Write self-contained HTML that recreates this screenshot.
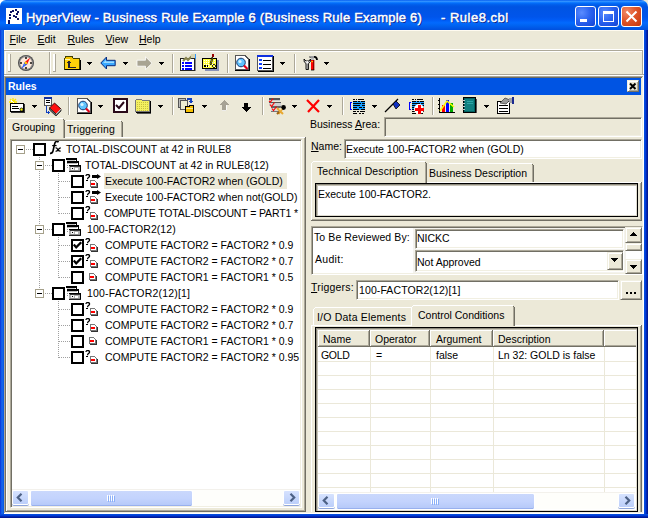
<!DOCTYPE html><html><head><meta charset="utf-8"><style>
html,body{margin:0;padding:0;width:648px;height:518px;overflow:hidden;background:#ECE9D8}
.a{position:absolute;box-sizing:border-box}
.t{position:absolute;font:10.5px/13px "Liberation Sans",sans-serif;white-space:pre;color:#000}
.u{text-decoration:underline}
</style></head><body>

<div class="a" style="left:0px;top:0px;width:8px;height:8px;background:#fff"></div>
<div class="a" style="left:0px;top:0px;width:648px;height:30px;background:linear-gradient(to bottom,#0058ee 0%,#3593ff 4%,#288eff 6%,#127dff 8%,#036ffc 10%,#0262ee 14%,#0057e5 20%,#0054e3 24%,#0055eb 56%,#005bf5 66%,#026afe 76%,#0062ef 86%,#0058e8 93%,#0050dc 100%);border-radius:6px 7px 0 0"></div>
<div class="a" style="left:0px;top:30px;width:4px;height:488px;background:linear-gradient(to right,#0831d9,#166aee 50%,#0855dd)"></div>
<div class="a" style="left:644px;top:30px;width:4px;height:488px;background:linear-gradient(to right,#0855dd,#003bda 40%,#001ea0 75%,#00138c)"></div>
<div class="a" style="left:0px;top:514px;width:648px;height:4px;background:linear-gradient(to bottom,#0855dd,#003bda 40%,#001ea0 75%,#00138c)"></div>
<svg class="a" style="left:6px;top:8px" width="16" height="16" viewBox="0 0 16 16" shape-rendering="crispEdges"><rect width="16" height="16" fill="#fff"/><rect x="2" y="14" width="2" height="2" fill="#0a1060"/><rect x="2" y="12" width="2" height="2" fill="#0a1060"/><rect x="3" y="9" width="2" height="2" fill="#0a1060"/><rect x="3" y="6" width="2" height="2" fill="#0a1060"/><rect x="4" y="3" width="2" height="2" fill="#0a1060"/><rect x="6" y="2" width="2" height="2" fill="#0a1060"/><rect x="9" y="1" width="2" height="2" fill="#0a1060"/><rect x="11" y="3" width="2" height="2" fill="#0a1060"/><rect x="10" y="5" width="2" height="2" fill="#0a1060"/><rect x="7" y="7" width="2" height="2" fill="#0a1060"/><rect x="9" y="8" width="2" height="2" fill="#0a1060"/><rect x="11" y="10" width="2" height="2" fill="#0a1060"/></svg>
<div class="a" style="left:26px;top:10px;font:13px/16px 'Liberation Sans',sans-serif;color:#fff;white-space:pre;-webkit-text-stroke:0.45px #fff;letter-spacing:0.22px;text-shadow:1px 1px 0 #0a1e80">HyperView - Business Rule Example 6 (Business Rule Example 6)</div>
<div class="a" style="left:441px;top:10px;font:13px/16px 'Liberation Sans',sans-serif;color:#fff;white-space:pre;-webkit-text-stroke:0.45px #fff;letter-spacing:0.5px;text-shadow:1px 1px 0 #0a1e80">- Rule8.cbl</div>
<div class="a" style="left:575px;top:6px;width:21px;height:21px;border:1px solid #fff;border-radius:3px;background:radial-gradient(circle at 30% 30%,#5a8cff 0%,#2c64f0 45%,#1a4fe0 80%,#1742c8 100%)"></div>
<svg class="a" style="left:575px;top:6px" width="21" height="21" viewBox="0 0 21 21" shape-rendering="crispEdges"><rect x="5" y="13" width="7" height="3" fill="#fff"/></svg>
<div class="a" style="left:598px;top:6px;width:21px;height:21px;border:1px solid #fff;border-radius:3px;background:radial-gradient(circle at 30% 30%,#5a8cff 0%,#2c64f0 45%,#1a4fe0 80%,#1742c8 100%)"></div>
<svg class="a" style="left:598px;top:6px" width="21" height="21" viewBox="0 0 21 21" shape-rendering="crispEdges"><rect x="5.5" y="5.5" width="10" height="10" fill="none" stroke="#fff" stroke-width="1"/><rect x="5" y="5" width="11" height="3" fill="#fff"/></svg>
<div class="a" style="left:621px;top:6px;width:21px;height:21px;border:1px solid #fff;border-radius:3px;background:radial-gradient(circle at 25% 25%,#f08a68 0%,#e0552a 45%,#cc3f14 85%,#b8350e 100%)"></div>
<svg class="a" style="left:621px;top:6px" width="21" height="21" viewBox="0 0 21 21" shape-rendering="crispEdges"><path d="M5.5 5.5 L15.5 15.5 M15.5 5.5 L5.5 15.5" stroke="#fff" stroke-width="2" shape-rendering="auto"/></svg>
<div class="t" style="left:9.5px;top:33px;"><span class="u">F</span>ile</div>
<div class="t" style="left:37.5px;top:33px;"><span class="u">E</span>dit</div>
<div class="t" style="left:67.5px;top:33px;"><span class="u">R</span>ules</div>
<div class="t" style="left:105.5px;top:33px;"><span class="u">V</span>iew</div>
<div class="t" style="left:139px;top:33px;"><span class="u">H</span>elp</div>
<div class="a" style="left:4px;top:30px;width:640px;height:1px;background:#FFFBF0"></div>
<div class="a" style="left:4px;top:30px;width:1px;height:19px;background:#FFFBF0"></div>
<div class="a" style="left:4px;top:49px;width:640px;height:1px;background:#fff"></div>
<div class="a" style="left:4px;top:50px;width:640px;height:1px;background:#ACA899"></div>
<div class="a" style="left:5px;top:51px;width:637px;height:1px;background:#fff"></div>
<div class="a" style="left:5px;top:51px;width:1px;height:23px;background:#fff"></div>
<div class="a" style="left:642px;top:50px;width:1px;height:25px;background:#ACA899"></div>
<div class="a" style="left:643px;top:30px;width:1px;height:46px;background:#fff"></div>
<div class="a" style="left:4px;top:74px;width:640px;height:1px;background:#ACA899"></div>
<div class="a" style="left:4px;top:75px;width:640px;height:1px;background:#fff"></div>
<div class="a" style="left:49px;top:52px;width:1px;height:22px;background:#ACA899"></div>
<div class="a" style="left:50px;top:52px;width:1px;height:22px;background:#fff"></div>
<div class="a" style="left:8px;top:54px;width:1px;height:18px;background:#fff"></div>
<div class="a" style="left:9px;top:54px;width:1px;height:18px;background:#fff"></div>
<div class="a" style="left:10px;top:54px;width:1px;height:18px;background:#ACA899"></div>
<div class="a" style="left:8px;top:71px;width:3px;height:1px;background:#ACA899"></div>
<div class="a" style="left:53px;top:54px;width:1px;height:18px;background:#fff"></div>
<div class="a" style="left:54px;top:54px;width:1px;height:18px;background:#fff"></div>
<div class="a" style="left:55px;top:54px;width:1px;height:18px;background:#ACA899"></div>
<div class="a" style="left:53px;top:71px;width:3px;height:1px;background:#ACA899"></div>
<svg class="a" style="left:17px;top:54px" width="18" height="18" viewBox="0 0 18 18" shape-rendering="crispEdges"><g shape-rendering="auto"><circle cx="9" cy="9" r="8" fill="#4a4a4a" /><circle cx="9" cy="9" r="7.2" fill="#8a8a8a"/><circle cx="9" cy="9" r="6" fill="#fce8d8"/><path d="M13.2 3.6 L10.2 10.2 L7.6 8.2 Z" fill="#ff1010"/><path d="M4.6 14.6 L7.6 8.2 L10.2 10.2 Z" fill="#1020ff"/><path d="M5.5 13.5 L7.6 9.5 L8 11Z" fill="#40c0ff"/><circle cx="8.8" cy="9.1" r="1.3" fill="#ffd000"/><rect x="8.3" y="3" width="1.4" height="2" fill="#000"/><rect x="8.3" y="13" width="1.4" height="2" fill="#000"/><rect x="3" y="8.3" width="2" height="1.4" fill="#000"/><rect x="13" y="8.3" width="2" height="1.4" fill="#000"/></g></svg>
<svg class="a" style="left:64px;top:55px" width="17" height="16" viewBox="0 0 17 16" shape-rendering="crispEdges"><path d="M2 1.5 H8 L9.5 3.5 H15.5 V14.5 H0.5 V3.5 Z" fill="#f5c400" stroke="#404000" stroke-width="1"/><rect x="1" y="4" width="14" height="10" fill="#ffd20a"/><rect x="1" y="4" width="5" height="1" fill="#fff8b0"/><path d="M0.5 14.5 H16.5 V4.5" stroke="#000" fill="none" stroke-width="1"/><path d="M5 12.5 H12 M5 12.5 V6" stroke="#223" stroke-width="1.4" fill="none"/><path d="M2.5 8 L5 5 L7.5 8 Z" fill="#223"/></svg>
<svg class="a" style="left:87px;top:62px" width="5" height="3" viewBox="0 0 5 3" shape-rendering="crispEdges"><rect x="0" y="0" width="5" height="1" fill="#000"/><rect x="1" y="1" width="3" height="1" fill="#000"/><rect x="2" y="2" width="1" height="1" fill="#000"/></svg>
<svg class="a" style="left:100px;top:56px" width="16" height="14" viewBox="0 0 16 14" shape-rendering="crispEdges"><g shape-rendering="auto"><path d="M0.8 7 L6.5 1 V4.3 H15.2 V9.7 H6.5 V13 Z" fill="#39a8ff" stroke="#0b2a7a" stroke-width="1"/><path d="M3 7 L6 4 V5.5 H14 V7 H3Z" fill="#9fdcff"/></g></svg>
<svg class="a" style="left:123px;top:62px" width="5" height="3" viewBox="0 0 5 3" shape-rendering="crispEdges"><rect x="0" y="0" width="5" height="1" fill="#000"/><rect x="1" y="1" width="3" height="1" fill="#000"/><rect x="2" y="2" width="1" height="1" fill="#000"/></svg>
<svg class="a" style="left:136px;top:56px" width="17" height="15" viewBox="0 0 17 15" shape-rendering="crispEdges"><g shape-rendering="auto"><path d="M16 7.2 L9.5 0.8 V4.2 H1 V10.2 H9.5 V13.6 Z" fill="#a8a493" stroke="#fff" stroke-width="0.8"/></g></svg>
<svg class="a" style="left:159px;top:62px" width="5" height="3" viewBox="0 0 5 3" shape-rendering="crispEdges"><rect x="0" y="0" width="5" height="1" fill="#000"/><rect x="1" y="1" width="3" height="1" fill="#000"/><rect x="2" y="2" width="1" height="1" fill="#000"/></svg>
<div class="a" style="left:172px;top:54px;width:1px;height:19px;background:#ACA899"></div>
<div class="a" style="left:173px;top:54px;width:1px;height:19px;background:#fff"></div>
<svg class="a" style="left:180px;top:54px" width="17" height="17" viewBox="0 0 17 17" shape-rendering="crispEdges"><rect x="0.5" y="4.5" width="14" height="12" fill="#fff" stroke="#222" stroke-width="1"/><rect x="15" y="5" width="1" height="12" fill="#888"/><path d="M3 7 L6 4 L8 6 L12 2" stroke="#8a8650" stroke-width="2.2" fill="none" shape-rendering="auto"/><rect x="11" y="0" width="5" height="4" fill="#d8d4b0"/><rect x="15" y="0" width="1" height="5" fill="#39f"/><rect x="2" y="8" width="2" height="1.5" fill="#00f"/><rect x="5" y="8" width="7" height="1.5" fill="#00f"/><rect x="2" y="11" width="2" height="1.5" fill="#00f"/><rect x="5" y="11" width="7" height="1.5" fill="#00f"/><rect x="2" y="14" width="2" height="1.5" fill="#00f"/><rect x="5" y="14" width="7" height="1.5" fill="#00f"/></svg>
<svg class="a" style="left:202px;top:54px" width="18" height="17" viewBox="0 0 18 17" shape-rendering="crispEdges"><rect x="3" y="6" width="14" height="11" fill="#8a93b8"/><rect x="0.5" y="4.5" width="14" height="10" fill="#ffff40" stroke="#000" stroke-width="1"/><path d="M1 5 h13 v9 h-13z" fill="url(#dots)"/><circle cx="11" cy="1.8" r="1.5" fill="#900"/><path d="M10 3 L8 10 L9 11 L11 4 Z" fill="#ff0" stroke="#000" stroke-width="0.8" shape-rendering="auto"/><circle cx="3" cy="12" r="0.8" fill="#000"/><circle cx="5.5" cy="12" r="0.8" fill="#000"/><circle cx="12" cy="12" r="1.2" fill="none" stroke="#000" stroke-width="0.8"/><defs><pattern id="dots" width="2" height="2" patternUnits="userSpaceOnUse"><rect width="1" height="1" fill="#fff"/></pattern></defs></svg>
<div class="a" style="left:227px;top:54px;width:1px;height:19px;background:#ACA899"></div>
<div class="a" style="left:228px;top:54px;width:1px;height:19px;background:#fff"></div>
<svg class="a" style="left:235px;top:55px" width="15" height="16" viewBox="0 0 15 16" shape-rendering="crispEdges"><path d="M0.5 0.5 H10 L13.5 4 V14.5 H0.5 Z" fill="#fff" stroke="#555" stroke-width="1"/><path d="M0 15 H14 V4" stroke="#000" fill="none"/><g shape-rendering="auto"><circle cx="6" cy="7.5" r="4.3" fill="#5fc3ff" stroke="#1a3a70" stroke-width="1"/><circle cx="5" cy="6.5" r="1.6" fill="#d8f4ff"/><path d="M9 10.5 L12.5 14" stroke="#e0001a" stroke-width="2.2"/></g></svg>
<svg class="a" style="left:257px;top:55px" width="17" height="17" viewBox="0 0 17 17" shape-rendering="crispEdges"><rect x="0.5" y="0.5" width="15" height="15" fill="#fff" stroke="#555"/><rect x="0" y="0" width="16" height="2" fill="#1030e0"/><path d="M16.5 1 V16.5 H1" stroke="#000" fill="none"/><rect x="2" y="4" width="3" height="2" fill="#1040ff"/><rect x="6" y="4.5" width="8" height="1.2" fill="#000"/><rect x="2" y="8" width="3" height="2" fill="#1040ff"/><rect x="6" y="8.5" width="8" height="1.2" fill="#000"/><rect x="2" y="12" width="3" height="2" fill="#1040ff"/><rect x="6" y="12.5" width="8" height="1.2" fill="#000"/></svg>
<svg class="a" style="left:280px;top:62px" width="5" height="3" viewBox="0 0 5 3" shape-rendering="crispEdges"><rect x="0" y="0" width="5" height="1" fill="#000"/><rect x="1" y="1" width="3" height="1" fill="#000"/><rect x="2" y="2" width="1" height="1" fill="#000"/></svg>
<div class="a" style="left:294px;top:54px;width:1px;height:19px;background:#ACA899"></div>
<div class="a" style="left:295px;top:54px;width:1px;height:19px;background:#fff"></div>
<svg class="a" style="left:302px;top:55px" width="16" height="16" viewBox="0 0 16 16" shape-rendering="crispEdges"><g shape-rendering="auto"><path d="M2 4 Q1.5 7.5 4 8.5 L4 14.5 H6.5 L6.5 8.5 Q9 7.5 8.5 4 L7 6 H4 Z" fill="#d0d0d0" stroke="#000" stroke-width="0.9"/><circle cx="5.2" cy="7" r="0.9" fill="#fff"/><path d="M6 9 V14" stroke="#333" stroke-width="0.8"/><path d="M7.5 1.8 H12.5 Q15 2 15 5" stroke="#000" stroke-width="1.8" fill="none"/><path d="M7.5 1.8 H12" stroke="#c8c8c8" stroke-width="1.2"/><rect x="9" y="5" width="3.2" height="10" fill="#ff0000"/><rect x="11.2" y="5" width="1" height="10" fill="#700"/><rect x="9" y="2.5" width="3" height="2.5" fill="#bbb"/><rect x="9.5" y="6" width="1.2" height="1.2" fill="#ff0"/><path d="M9 15 H12.2" stroke="#000" stroke-width="0.8"/></g></svg>
<svg class="a" style="left:324px;top:62px" width="5" height="3" viewBox="0 0 5 3" shape-rendering="crispEdges"><rect x="0" y="0" width="5" height="1" fill="#000"/><rect x="1" y="1" width="3" height="1" fill="#000"/><rect x="2" y="2" width="1" height="1" fill="#000"/></svg>
<div class="a" style="left:4px;top:76px;width:640px;height:1px;background:#ACA899"></div>
<div class="a" style="left:4px;top:77px;width:640px;height:1px;background:#716F64"></div>
<div class="a" style="left:4px;top:76px;width:1px;height:438px;background:#ACA899"></div>
<div class="a" style="left:5px;top:77px;width:1px;height:436px;background:#716F64"></div>
<div class="a" style="left:643px;top:76px;width:1px;height:438px;background:#fff"></div>
<div class="a" style="left:642px;top:77px;width:1px;height:436px;background:#F1EFE2"></div>
<div class="a" style="left:4px;top:513px;width:640px;height:1px;background:#fff"></div>
<div class="a" style="left:5px;top:512px;width:638px;height:1px;background:#F1EFE2"></div>
<div class="a" style="left:6px;top:78px;width:635px;height:17px;background:#0054E3"></div>
<div class="a" style="left:8px;top:80px;font:bold 10.5px/13px 'Liberation Sans',sans-serif;color:#fff">Rules</div>
<div class="a" style="left:627px;top:80px;width:12px;height:12px;background:#ECE9D8;border-style:solid;border-width:1px;border-color:#F1EFE2 #716F64 #716F64 #F1EFE2;box-shadow:inset 1px 1px 0 #fff, inset -1px -1px 0 #ACA899"></div>
<svg class="a" style="left:627px;top:80px" width="12" height="12" viewBox="0 0 12 12" shape-rendering="crispEdges"><path d="M3 3.5 L8.5 9 M8.5 3.5 L3 9" stroke="#000" stroke-width="2" shape-rendering="auto"/></svg>
<svg class="a" style="left:8px;top:97px" width="18" height="17" viewBox="0 0 18 17" shape-rendering="crispEdges"><g shape-rendering="auto" stroke="#ffe800" stroke-width="1.3"><path d="M5 1 V9 M1 5 H9 M2 2 L8 8 M8 2 L2 8"/></g><path d="M3 3.5 L7 6.5" stroke="#fff" stroke-width="1"/><rect x="2.5" y="6.5" width="13" height="8" fill="#fff" stroke="#000"/><rect x="16" y="7" width="1" height="9" fill="#333"/><rect x="3" y="15" width="14" height="1" fill="#333"/><rect x="4" y="9" width="6" height="1" fill="#000"/><rect x="4" y="11" width="7" height="1" fill="#000"/><circle cx="13.5" cy="12.5" r="1.5" fill="#ff0" stroke="#000" stroke-width="0.8" shape-rendering="auto"/></svg>
<svg class="a" style="left:32px;top:105px" width="5" height="3" viewBox="0 0 5 3" shape-rendering="crispEdges"><rect x="0" y="0" width="5" height="1" fill="#000"/><rect x="1" y="1" width="3" height="1" fill="#000"/><rect x="2" y="2" width="1" height="1" fill="#000"/></svg>
<svg class="a" style="left:44px;top:97px" width="18" height="19" viewBox="0 0 18 19" shape-rendering="crispEdges"><rect x="0.5" y="0.5" width="7" height="8" fill="#fff" stroke="#555"/><rect x="0" y="0" width="8" height="2" fill="#1030a0"/><rect x="2" y="3" width="4" height="1" fill="#000"/><rect x="2" y="5" width="4" height="1" fill="#000"/><path d="M2.5 9 V15.5 H4" stroke="#1040c0" stroke-width="1.6" fill="none"/><path d="M3.5 13 L6 15.5 L3.5 18 Z" fill="#1040c0"/><g shape-rendering="auto"><path d="M5.5 11 L10.5 6 L17 12 L12 17 Z" fill="#ff1010" stroke="#300" stroke-width="0.9"/><path d="M5.5 11 V13 L12 19 L17 14 V12 L12 17 Z" fill="#707070" stroke="#222" stroke-width="0.8"/><path d="M12 17 L17 12" stroke="#fff" stroke-width="0.7"/></g></svg>
<div class="a" style="left:68px;top:97px;width:1px;height:18px;background:#ACA899"></div>
<div class="a" style="left:69px;top:97px;width:1px;height:18px;background:#fff"></div>
<svg class="a" style="left:77px;top:98px" width="15" height="16" viewBox="0 0 15 16" shape-rendering="crispEdges"><path d="M0.5 0.5 H10 L13.5 4 V14.5 H0.5 Z" fill="#fff" stroke="#555" stroke-width="1"/><path d="M0 15 H14 V4" stroke="#000" fill="none"/><g shape-rendering="auto"><circle cx="6" cy="7.5" r="4.3" fill="#5fc3ff" stroke="#1a3a70" stroke-width="1"/><circle cx="5" cy="6.5" r="1.6" fill="#d8f4ff"/><path d="M9 10.5 L12.5 14" stroke="#e0001a" stroke-width="2.2"/></g></svg>
<svg class="a" style="left:98px;top:105px" width="5" height="3" viewBox="0 0 5 3" shape-rendering="crispEdges"><rect x="0" y="0" width="5" height="1" fill="#000"/><rect x="1" y="1" width="3" height="1" fill="#000"/><rect x="2" y="2" width="1" height="1" fill="#000"/></svg>
<svg class="a" style="left:112px;top:97px" width="16" height="16" viewBox="0 0 16 16" shape-rendering="crispEdges"><rect x="1.5" y="1.5" width="13" height="13" fill="#fff" stroke="#2a0a1a" stroke-width="2"/><path d="M4 8 L7 11 L12 5" stroke="#2a0a1a" stroke-width="2" fill="none" shape-rendering="auto"/></svg>
<svg class="a" style="left:135px;top:98px" width="17" height="16" viewBox="0 0 17 16" shape-rendering="crispEdges"><path d="M0.5 2.5 L2 1 H6 L7.5 2.5 H14.5 V13.5 H0.5 Z" fill="#f4f060" stroke="#777" stroke-width="1"/><path d="M1 3 h13 v10 h-13z" fill="url(#dots2)"/><path d="M1 14.5 H15.5 V3" stroke="#000" fill="none"/><rect x="2" y="15" width="14" height="1" fill="#555"/><defs><pattern id="dots2" width="2" height="2" patternUnits="userSpaceOnUse"><rect width="1" height="1" fill="#c8c040"/></pattern></defs></svg>
<svg class="a" style="left:158px;top:105px" width="5" height="3" viewBox="0 0 5 3" shape-rendering="crispEdges"><rect x="0" y="0" width="5" height="1" fill="#000"/><rect x="1" y="1" width="3" height="1" fill="#000"/><rect x="2" y="2" width="1" height="1" fill="#000"/></svg>
<div class="a" style="left:172px;top:97px;width:1px;height:18px;background:#ACA899"></div>
<div class="a" style="left:173px;top:97px;width:1px;height:18px;background:#fff"></div>
<svg class="a" style="left:178px;top:97px" width="18" height="17" viewBox="0 0 18 17" shape-rendering="crispEdges"><rect x="0.5" y="1.5" width="7" height="9" fill="#bbb" stroke="#555"/><rect x="2.5" y="3.5" width="7" height="9" fill="#eeeed0" stroke="#555"/><path d="M9 2 H13 V5" stroke="#1040c0" stroke-width="1.3" fill="none"/><path d="M11 4 L13 6.5 L15 4" fill="#1040c0"/><path d="M7.5 9.5 H11 L12 8.5 H15.5 V15.5 H7.5 Z" fill="#f5c000" stroke="#000" stroke-width="1"/><rect x="8" y="11" width="7" height="1" fill="#ffe890"/></svg>
<svg class="a" style="left:202px;top:105px" width="5" height="3" viewBox="0 0 5 3" shape-rendering="crispEdges"><rect x="0" y="0" width="5" height="1" fill="#000"/><rect x="1" y="1" width="3" height="1" fill="#000"/><rect x="2" y="2" width="1" height="1" fill="#000"/></svg>
<svg class="a" style="left:219px;top:100px" width="10" height="11" viewBox="0 0 10 11" shape-rendering="crispEdges"><path d="M5 0 L10 5 H7 V11 H3 V5 H0 Z" fill="#a6a294"/><path d="M3 10.5 H7 M7 5 V10" stroke="#fff" stroke-width="0.8"/></svg>
<svg class="a" style="left:241px;top:103px" width="10" height="9" viewBox="0 0 10 9" shape-rendering="crispEdges"><path d="M5 9 L10 4 H7 V0 H3 V4 H0 Z" fill="#000"/></svg>
<div class="a" style="left:262px;top:97px;width:1px;height:18px;background:#ACA899"></div>
<div class="a" style="left:263px;top:97px;width:1px;height:18px;background:#fff"></div>
<svg class="a" style="left:268px;top:97px" width="18" height="18" viewBox="0 0 18 18" shape-rendering="crispEdges"><rect x="1" y="1" width="11" height="3" fill="#c8c8c8"/><rect x="1" y="1" width="11" height="1.5" fill="#555"/><rect x="1" y="4.5" width="12" height="4" fill="#d0d0d0"/><rect x="1" y="4.5" width="12" height="1.5" fill="#555"/><rect x="3" y="9" width="10" height="6" fill="#d8d8d8"/><rect x="3" y="9" width="10" height="1.5" fill="#666"/><rect x="3" y="13.5" width="10" height="1.5" fill="#777"/><g shape-rendering="auto" fill="none" stroke="#f00" stroke-width="1.1"><path d="M1 4 L2.5 5 L5 1.5"/><path d="M2 7.5 L3.5 9.5 L6.5 5.5"/><path d="M4 11.5 L5.5 13.5 L8.5 9.5"/></g><g shape-rendering="auto"><path d="M9 11 L15 17 M10.5 17 L15 11" stroke="#e8a830" stroke-width="2"/><path d="M9 17 L11 15" stroke="#a06010" stroke-width="2"/><circle cx="15.5" cy="10.5" r="2.4" fill="#000"/><circle cx="12.5" cy="12" r="1.2" fill="#f4e0b0"/></g></svg>
<svg class="a" style="left:292px;top:105px" width="5" height="3" viewBox="0 0 5 3" shape-rendering="crispEdges"><rect x="0" y="0" width="5" height="1" fill="#000"/><rect x="1" y="1" width="3" height="1" fill="#000"/><rect x="2" y="2" width="1" height="1" fill="#000"/></svg>
<svg class="a" style="left:305px;top:98px" width="16" height="16" viewBox="0 0 16 16" shape-rendering="crispEdges"><path d="M2 2 L14 14 M14 2 L3 14" stroke="#f00" stroke-width="2.2" shape-rendering="auto"/></svg>
<svg class="a" style="left:327px;top:105px" width="5" height="3" viewBox="0 0 5 3" shape-rendering="crispEdges"><rect x="0" y="0" width="5" height="1" fill="#000"/><rect x="1" y="1" width="3" height="1" fill="#000"/><rect x="2" y="2" width="1" height="1" fill="#000"/></svg>
<div class="a" style="left:342px;top:97px;width:1px;height:18px;background:#ACA899"></div>
<div class="a" style="left:343px;top:97px;width:1px;height:18px;background:#fff"></div>
<svg class="a" style="left:350px;top:98px" width="16" height="17" viewBox="0 0 16 17" shape-rendering="crispEdges"><rect x="0" y="4" width="2" height="1" fill="#00f"/><rect x="0" y="4" width="1" height="8" fill="#00f"/><rect x="0" y="11" width="2" height="1" fill="#00f"/><rect x="3" y="3" width="12" height="9" fill="#1aa0ff"/><rect x="3" y="1" width="2" height="1" fill="#000"/><rect x="6" y="1" width="1" height="1" fill="#000"/><rect x="8" y="1" width="6" height="1" fill="#000"/><rect x="3" y="3" width="4" height="1" fill="#000"/><rect x="8" y="3" width="2" height="1" fill="#000"/><rect x="11" y="3" width="4" height="1" fill="#000"/><rect x="3" y="5" width="5" height="1" fill="#000"/><rect x="8" y="5" width="3" height="1" fill="#000"/><rect x="12" y="5" width="3" height="1" fill="#000"/><rect x="3" y="7" width="5" height="1" fill="#000"/><rect x="8" y="7" width="2" height="1" fill="#000"/><rect x="12" y="7" width="3" height="1" fill="#000"/><rect x="3" y="9" width="4" height="1" fill="#000"/><rect x="9" y="9" width="3" height="1" fill="#000"/><rect x="13" y="9" width="2" height="1" fill="#000"/><rect x="3" y="11" width="6" height="1" fill="#000"/><rect x="11" y="11" width="4" height="1" fill="#000"/><rect x="3" y="13" width="3" height="1" fill="#000"/><rect x="7" y="13" width="2" height="1" fill="#000"/><rect x="10" y="13" width="5" height="1" fill="#000"/><rect x="3" y="15" width="4" height="1" fill="#000"/><rect x="9" y="15" width="2" height="1" fill="#000"/><rect x="12" y="15" width="2" height="1" fill="#000"/></svg>
<svg class="a" style="left:372px;top:105px" width="5" height="3" viewBox="0 0 5 3" shape-rendering="crispEdges"><rect x="0" y="0" width="5" height="1" fill="#000"/><rect x="1" y="1" width="3" height="1" fill="#000"/><rect x="2" y="2" width="1" height="1" fill="#000"/></svg>
<svg class="a" style="left:384px;top:98px" width="17" height="15" viewBox="0 0 17 15" shape-rendering="crispEdges"><g shape-rendering="auto"><path d="M1 14 L14 1" stroke="#000" stroke-width="1.3"/><path d="M9 6 L12 3 L16 7 L12 11 Z" fill="#1030c0" stroke="#000" stroke-width="0.8"/></g></svg>
<svg class="a" style="left:409px;top:98px" width="16" height="17" viewBox="0 0 16 17" shape-rendering="crispEdges"><rect x="0" y="4" width="2" height="1" fill="#00f"/><rect x="0" y="4" width="1" height="8" fill="#00f"/><rect x="0" y="11" width="2" height="1" fill="#00f"/><rect x="3" y="3" width="12" height="9" fill="#1aa0ff"/><rect x="3" y="1" width="2" height="1" fill="#000"/><rect x="6" y="1" width="1" height="1" fill="#000"/><rect x="8" y="1" width="6" height="1" fill="#000"/><rect x="3" y="3" width="4" height="1" fill="#000"/><rect x="8" y="3" width="2" height="1" fill="#000"/><rect x="11" y="3" width="4" height="1" fill="#000"/><rect x="3" y="5" width="5" height="1" fill="#000"/><rect x="8" y="5" width="3" height="1" fill="#000"/><rect x="12" y="5" width="3" height="1" fill="#000"/><rect x="3" y="7" width="5" height="1" fill="#000"/><rect x="8" y="7" width="2" height="1" fill="#000"/><rect x="12" y="7" width="3" height="1" fill="#000"/><rect x="3" y="9" width="4" height="1" fill="#000"/><rect x="9" y="9" width="3" height="1" fill="#000"/><rect x="13" y="9" width="2" height="1" fill="#000"/><rect x="3" y="11" width="6" height="1" fill="#000"/><rect x="11" y="11" width="4" height="1" fill="#000"/><rect x="3" y="13" width="3" height="1" fill="#000"/><rect x="7" y="13" width="2" height="1" fill="#000"/><rect x="10" y="13" width="5" height="1" fill="#000"/><rect x="3" y="15" width="4" height="1" fill="#000"/><rect x="9" y="15" width="2" height="1" fill="#000"/><rect x="12" y="15" width="2" height="1" fill="#000"/><g shape-rendering="auto"><circle cx="10" cy="11" r="5" fill="#fff"/></g><rect x="8.5" y="6.5" width="3" height="9" fill="#f00"/><rect x="5.5" y="9.5" width="9" height="3" fill="#f00"/></svg>
<div class="a" style="left:432px;top:97px;width:1px;height:18px;background:#ACA899"></div>
<div class="a" style="left:433px;top:97px;width:1px;height:18px;background:#fff"></div>
<svg class="a" style="left:438px;top:97px" width="18" height="17" viewBox="0 0 18 17" shape-rendering="crispEdges"><path d="M1.5 1 V15.5 H17" stroke="#000" fill="none"/><rect x="4" y="8" width="3" height="7" fill="#f00"/><rect x="8" y="3" width="3" height="12" fill="#00f"/><rect x="12" y="6" width="3" height="9" fill="#0a0"/><path d="M2 14 L9 4 L16 10" stroke="#ff0" stroke-width="1.5" fill="none" shape-rendering="auto"/><path d="M0 3 H1 M0 7 H1 M0 11 H1" stroke="#000"/></svg>
<svg class="a" style="left:462px;top:97px" width="15" height="17" viewBox="0 0 15 17" shape-rendering="crispEdges"><rect x="1.5" y="0.5" width="12" height="15" fill="#006060" stroke="#000"/><rect x="3" y="2" width="9" height="12" fill="#108080"/><rect x="13.5" y="2" width="1" height="14" fill="#555"/><path d="M0 3 H3 M0 6 H3 M0 9 H3 M0 12 H3" stroke="#ccc" stroke-width="1"/><path d="M5 4 H11 M5 6 H11" stroke="#40c0c0" stroke-width="0.6"/></svg>
<svg class="a" style="left:484px;top:105px" width="5" height="3" viewBox="0 0 5 3" shape-rendering="crispEdges"><rect x="0" y="0" width="5" height="1" fill="#000"/><rect x="1" y="1" width="3" height="1" fill="#000"/><rect x="2" y="2" width="1" height="1" fill="#000"/></svg>
<svg class="a" style="left:497px;top:97px" width="18" height="17" viewBox="0 0 18 17" shape-rendering="crispEdges"><rect x="0.5" y="4.5" width="12" height="12" fill="#fff" stroke="#000"/><rect x="2" y="8" width="9" height="1" fill="#000"/><rect x="2" y="11" width="9" height="1" fill="#000"/><rect x="2" y="14" width="9" height="1" fill="#000"/><path d="M3 6 L8 1 L13 3 L9 7 Z" fill="#999" stroke="#333" stroke-width="0.7" shape-rendering="auto"/><rect x="12" y="1" width="4" height="5" fill="#a0a0a8"/><rect x="15" y="0" width="2" height="7" fill="#1a2a90"/></svg>
<div class="a" style="left:6px;top:137px;width:300px;height:1px;background:#fff"></div>
<div class="a" style="left:6px;top:137px;width:1px;height:375px;background:#fff"></div>
<div class="a" style="left:305px;top:137px;width:1px;height:375px;background:#716F64"></div>
<div class="a" style="left:304px;top:138px;width:1px;height:373px;background:#ACA899"></div>
<div class="a" style="left:6px;top:511px;width:300px;height:1px;background:#716F64"></div>
<div class="a" style="left:7px;top:510px;width:298px;height:1px;background:#ACA899"></div>
<div class="a" style="left:7px;top:119px;width:57px;height:19px;background:#ECE9D8"></div>
<div class="a" style="left:8px;top:118px;width:55px;height:1px;background:#fff"></div>
<div class="a" style="left:6px;top:120px;width:1px;height:18px;background:#fff"></div>
<div class="a" style="left:7px;top:119px;width:1px;height:1px;background:#fff"></div>
<div class="a" style="left:64px;top:120px;width:1px;height:18px;background:#716F64"></div>
<div class="a" style="left:63px;top:119px;width:1px;height:19px;background:#ACA899"></div>
<div class="a" style="left:63px;top:119px;width:1px;height:1px;background:#716F64"></div>
<div class="t" style="left:12px;top:121px;">Grouping</div>
<div class="a" style="left:66px;top:120px;width:55px;height:1px;background:#fff"></div>
<div class="a" style="left:65px;top:121px;width:1px;height:1px;background:#fff"></div>
<div class="a" style="left:122px;top:122px;width:1px;height:15px;background:#716F64"></div>
<div class="a" style="left:121px;top:121px;width:1px;height:16px;background:#ACA899"></div>
<div class="a" style="left:121px;top:121px;width:1px;height:1px;background:#716F64"></div>
<div class="t" style="left:67px;top:123px;letter-spacing:0.1px">Triggering</div>
<div class="a" style="left:10px;top:139px;width:292px;height:369px;background:#fff;border-style:solid;border-width:1px;border-color:#ACA899 #fff #fff #ACA899;box-shadow:inset 1px 1px 0 #716F64, inset -1px -1px 0 #F1EFE2"></div>
<div class="a" style="left:12px;top:489px;width:288px;height:17px;background:#FEFEFB;border-top:1px solid #F3F1EC"></div>
<div class="a" style="left:30px;top:490px;width:163px;height:16px;background:linear-gradient(to bottom,#CAD8FC 0%,#C3D3FD 50%,#B4C8F8 100%);border:1px solid #fff;border-bottom:none;border-radius:2px;box-shadow:inset 0 -1px 0 #98B0EE"></div>
<div class="a" style="left:107px;top:495px;width:1px;height:6px;background:#fff"></div>
<div class="a" style="left:108px;top:496px;width:1px;height:6px;background:#8CB0F8"></div>
<div class="a" style="left:109px;top:495px;width:1px;height:6px;background:#fff"></div>
<div class="a" style="left:110px;top:496px;width:1px;height:6px;background:#8CB0F8"></div>
<div class="a" style="left:111px;top:495px;width:1px;height:6px;background:#fff"></div>
<div class="a" style="left:112px;top:496px;width:1px;height:6px;background:#8CB0F8"></div>
<div class="a" style="left:113px;top:495px;width:1px;height:6px;background:#fff"></div>
<div class="a" style="left:114px;top:496px;width:1px;height:6px;background:#8CB0F8"></div>
<div class="a" style="left:12px;top:490px;width:17px;height:15px;background:linear-gradient(to bottom,#D6E2FE,#BCCFFA);border:1px solid #fff;border-radius:2px;box-shadow:0 1px 0 #8FA6DC"></div>
<svg class="a" style="left:16px;top:493px" width="8" height="9" viewBox="0 0 8 9" shape-rendering="crispEdges"><path d="M5.5 0.8 L1.8 4.5 L5.5 8.2" stroke="#4D6185" stroke-width="2.2" fill="none" shape-rendering="auto"/></svg>
<div class="a" style="left:283px;top:490px;width:17px;height:15px;background:linear-gradient(to bottom,#D6E2FE,#BCCFFA);border:1px solid #fff;border-radius:2px;box-shadow:0 1px 0 #8FA6DC"></div>
<svg class="a" style="left:288px;top:493px" width="8" height="9" viewBox="0 0 8 9" shape-rendering="crispEdges"><path d="M2.5 0.8 L6.2 4.5 L2.5 8.2" stroke="#4D6185" stroke-width="2.2" fill="none" shape-rendering="auto"/></svg>
<div class="a" style="left:0;top:0;width:648px;height:518px;clip-path:inset(141px 347px 29px 12px)">
<div class="a" style="left:39px;top:157px;width:1px;height:137px;background:repeating-linear-gradient(to bottom,#A0A0A0 0 1px,transparent 1px 2px)"></div>
<div class="a" style="left:58px;top:173px;width:1px;height:41px;background:repeating-linear-gradient(to bottom,#A0A0A0 0 1px,transparent 1px 2px)"></div>
<div class="a" style="left:58px;top:237px;width:1px;height:41px;background:repeating-linear-gradient(to bottom,#A0A0A0 0 1px,transparent 1px 2px)"></div>
<div class="a" style="left:58px;top:301px;width:1px;height:57px;background:repeating-linear-gradient(to bottom,#A0A0A0 0 1px,transparent 1px 2px)"></div>
<div class="a" style="left:16px;top:145px;width:9px;height:9px;border:1px solid #A5A08A;background:#fff"></div>
<div class="a" style="left:18px;top:149px;width:5px;height:1px;background:#000"></div>
<div class="a" style="left:26px;top:149px;width:7px;height:1px;background:repeating-linear-gradient(to right,#A0A0A0 0 1px,transparent 1px 2px)"></div>
<div class="a" style="left:33px;top:143px;width:13px;height:13px;border:2px solid #000;background:#fff"></div>
<svg class="a" style="left:48px;top:140px" width="15" height="15" viewBox="0 0 15 15" shape-rendering="crispEdges"><g shape-rendering="auto" fill="none" stroke="#000"><path d="M10.5 2.2 Q9.5 0.8 8 1.6 Q7 2.2 6.6 4 L5 11 Q4.4 13.6 2 13.4" stroke-width="1.6"/><path d="M4.2 5.6 H8.6" stroke-width="1.2"/><path d="M7.5 8 Q8.8 7.6 9.6 9.2 Q10.6 11.4 12.6 11" stroke-width="1.3"/><path d="M12.8 7.8 Q11.4 7.8 10 9.8 Q8.8 11.6 7.6 11" stroke-width="1.3"/></g></svg>
<div class="t" style="left:66px;top:143px;">TOTAL-DISCOUNT at 42 in RULE8</div>
<div class="a" style="left:35px;top:161px;width:9px;height:9px;border:1px solid #A5A08A;background:#fff"></div>
<div class="a" style="left:37px;top:165px;width:5px;height:1px;background:#000"></div>
<div class="a" style="left:45px;top:165px;width:7px;height:1px;background:repeating-linear-gradient(to right,#A0A0A0 0 1px,transparent 1px 2px)"></div>
<div class="a" style="left:52px;top:159px;width:13px;height:13px;border:2px solid #000;background:#fff"></div>
<svg class="a" style="left:66px;top:158px" width="15" height="14" viewBox="0 0 15 14" shape-rendering="crispEdges"><rect x="0" y="0" width="11" height="2" fill="#000"/><rect x="10" y="0" width="1" height="3" fill="#000"/><rect x="0" y="2" width="10" height="1" fill="#fff"/><rect x="1" y="2" width="8" height="1" fill="#c8c8c8"/><rect x="1" y="3" width="12" height="2" fill="#000"/><rect x="12" y="3" width="1" height="4" fill="#000"/><rect x="2" y="5" width="9" height="1" fill="#bbb"/><rect x="1" y="5" width="1" height="1" fill="#999"/><rect x="1" y="7" width="1" height="1" fill="#999"/><rect x="1" y="9" width="1" height="1" fill="#999"/><rect x="3" y="7" width="12" height="7" fill="#b0b0b0"/><rect x="3" y="7" width="12" height="1" fill="#000"/><rect x="4" y="8" width="10" height="1" fill="#333"/><rect x="14" y="7" width="1" height="7" fill="#000"/><rect x="3" y="13" width="12" height="1" fill="#222"/><rect x="5" y="9" width="3" height="3" fill="#eee"/><rect x="9" y="10" width="3" height="2" fill="#fff"/><rect x="6" y="10" width="1" height="1" fill="#000"/><rect x="4" y="12" width="10" height="1" fill="#888"/></svg>
<div class="t" style="left:85px;top:159px;">TOTAL-DISCOUNT at 42 in RULE8(12)</div>
<div class="a" style="left:59px;top:181px;width:12px;height:1px;background:repeating-linear-gradient(to right,#A0A0A0 0 1px,transparent 1px 2px)"></div>
<div class="a" style="left:71px;top:175px;width:13px;height:13px;border:2px solid #000;background:#fff"></div>
<div class="a" style="left:104px;top:173px;width:183px;height:16px;background:#ECE9D8"></div>
<svg class="a" style="left:85px;top:174px" width="6" height="8" viewBox="0 0 6 8" shape-rendering="crispEdges"><path d="M1 2 Q1 0.5 2.8 0.5 Q4.6 0.5 4.6 2 Q4.6 3 3.2 3.8 Q2.6 4.2 2.6 5.2" stroke="#000" stroke-width="1.3" fill="none" shape-rendering="auto"/><rect x="1" y="6" width="2" height="1" fill="#000"/></svg>
<svg class="a" style="left:90px;top:180px" width="8" height="8" viewBox="0 0 8 8" shape-rendering="crispEdges"><path d="M0.5 0.5 H4.5 L6.5 2.5 V6.5 H0.5 Z" fill="#fff" stroke="#777"/><path d="M1 7 H7 V3" stroke="#333" fill="none"/><rect x="1" y="3" width="4" height="2" fill="#f00"/></svg>
<svg class="a" style="left:92px;top:174px" width="9" height="5" viewBox="0 0 9 5" shape-rendering="crispEdges"><rect x="0" y="1" width="5" height="3" fill="#000"/><path d="M5 0 L9 2.5 L5 5 Z" fill="#000" shape-rendering="auto"/></svg>
<div class="t" style="left:105px;top:175px;">Execute 100-FACTOR2 when (GOLD)</div>
<div class="a" style="left:59px;top:197px;width:12px;height:1px;background:repeating-linear-gradient(to right,#A0A0A0 0 1px,transparent 1px 2px)"></div>
<div class="a" style="left:71px;top:191px;width:13px;height:13px;border:2px solid #000;background:#fff"></div>
<svg class="a" style="left:85px;top:190px" width="6" height="8" viewBox="0 0 6 8" shape-rendering="crispEdges"><path d="M1 2 Q1 0.5 2.8 0.5 Q4.6 0.5 4.6 2 Q4.6 3 3.2 3.8 Q2.6 4.2 2.6 5.2" stroke="#000" stroke-width="1.3" fill="none" shape-rendering="auto"/><rect x="1" y="6" width="2" height="1" fill="#000"/></svg>
<svg class="a" style="left:90px;top:196px" width="8" height="8" viewBox="0 0 8 8" shape-rendering="crispEdges"><path d="M0.5 0.5 H4.5 L6.5 2.5 V6.5 H0.5 Z" fill="#fff" stroke="#777"/><path d="M1 7 H7 V3" stroke="#333" fill="none"/><rect x="1" y="3" width="4" height="2" fill="#f00"/></svg>
<svg class="a" style="left:92px;top:190px" width="9" height="5" viewBox="0 0 9 5" shape-rendering="crispEdges"><rect x="0" y="1" width="5" height="3" fill="#000"/><path d="M5 0 L9 2.5 L5 5 Z" fill="#000" shape-rendering="auto"/></svg>
<div class="t" style="left:105px;top:191px;">Execute 100-FACTOR2 when not(GOLD)</div>
<div class="a" style="left:59px;top:213px;width:12px;height:1px;background:repeating-linear-gradient(to right,#A0A0A0 0 1px,transparent 1px 2px)"></div>
<div class="a" style="left:71px;top:207px;width:13px;height:13px;border:2px solid #000;background:#fff"></div>
<svg class="a" style="left:85px;top:206px" width="6" height="8" viewBox="0 0 6 8" shape-rendering="crispEdges"><path d="M1 2 Q1 0.5 2.8 0.5 Q4.6 0.5 4.6 2 Q4.6 3 3.2 3.8 Q2.6 4.2 2.6 5.2" stroke="#000" stroke-width="1.3" fill="none" shape-rendering="auto"/><rect x="1" y="6" width="2" height="1" fill="#000"/></svg>
<svg class="a" style="left:90px;top:212px" width="8" height="8" viewBox="0 0 8 8" shape-rendering="crispEdges"><path d="M0.5 0.5 H4.5 L6.5 2.5 V6.5 H0.5 Z" fill="#fff" stroke="#777"/><path d="M1 7 H7 V3" stroke="#333" fill="none"/><rect x="1" y="3" width="4" height="2" fill="#f00"/></svg>
<div class="t" style="left:104px;top:207px;letter-spacing:-0.13px">COMPUTE TOTAL-DISCOUNT = PART1 *</div>
<div class="a" style="left:35px;top:225px;width:9px;height:9px;border:1px solid #A5A08A;background:#fff"></div>
<div class="a" style="left:37px;top:229px;width:5px;height:1px;background:#000"></div>
<div class="a" style="left:45px;top:229px;width:7px;height:1px;background:repeating-linear-gradient(to right,#A0A0A0 0 1px,transparent 1px 2px)"></div>
<div class="a" style="left:52px;top:223px;width:13px;height:13px;border:2px solid #000;background:#fff"></div>
<svg class="a" style="left:66px;top:222px" width="15" height="14" viewBox="0 0 15 14" shape-rendering="crispEdges"><rect x="0" y="0" width="11" height="2" fill="#000"/><rect x="10" y="0" width="1" height="3" fill="#000"/><rect x="0" y="2" width="10" height="1" fill="#fff"/><rect x="1" y="2" width="8" height="1" fill="#c8c8c8"/><rect x="1" y="3" width="12" height="2" fill="#000"/><rect x="12" y="3" width="1" height="4" fill="#000"/><rect x="2" y="5" width="9" height="1" fill="#bbb"/><rect x="1" y="5" width="1" height="1" fill="#999"/><rect x="1" y="7" width="1" height="1" fill="#999"/><rect x="1" y="9" width="1" height="1" fill="#999"/><rect x="3" y="7" width="12" height="7" fill="#b0b0b0"/><rect x="3" y="7" width="12" height="1" fill="#000"/><rect x="4" y="8" width="10" height="1" fill="#333"/><rect x="14" y="7" width="1" height="7" fill="#000"/><rect x="3" y="13" width="12" height="1" fill="#222"/><rect x="5" y="9" width="3" height="3" fill="#eee"/><rect x="9" y="10" width="3" height="2" fill="#fff"/><rect x="6" y="10" width="1" height="1" fill="#000"/><rect x="4" y="12" width="10" height="1" fill="#888"/></svg>
<div class="t" style="left:87px;top:223px;letter-spacing:0.05px">100-FACTOR2(12)</div>
<div class="a" style="left:59px;top:245px;width:12px;height:1px;background:repeating-linear-gradient(to right,#A0A0A0 0 1px,transparent 1px 2px)"></div>
<div class="a" style="left:71px;top:239px;width:13px;height:13px;border:2px solid #000;background:#fff"></div>
<svg class="a" style="left:71px;top:239px" width="13" height="13" viewBox="0 0 13 13" shape-rendering="crispEdges"><path d="M2.8 5.6 L5.2 8.4 L10.2 3.2" stroke="#000" stroke-width="2.3" fill="none" shape-rendering="auto"/></svg>
<svg class="a" style="left:85px;top:238px" width="6" height="8" viewBox="0 0 6 8" shape-rendering="crispEdges"><path d="M1 2 Q1 0.5 2.8 0.5 Q4.6 0.5 4.6 2 Q4.6 3 3.2 3.8 Q2.6 4.2 2.6 5.2" stroke="#000" stroke-width="1.3" fill="none" shape-rendering="auto"/><rect x="1" y="6" width="2" height="1" fill="#000"/></svg>
<svg class="a" style="left:90px;top:244px" width="8" height="8" viewBox="0 0 8 8" shape-rendering="crispEdges"><path d="M0.5 0.5 H4.5 L6.5 2.5 V6.5 H0.5 Z" fill="#fff" stroke="#777"/><path d="M1 7 H7 V3" stroke="#333" fill="none"/><rect x="1" y="3" width="4" height="2" fill="#f00"/></svg>
<div class="t" style="left:105px;top:239px;">COMPUTE FACTOR2 = FACTOR2 * 0.9</div>
<div class="a" style="left:59px;top:261px;width:12px;height:1px;background:repeating-linear-gradient(to right,#A0A0A0 0 1px,transparent 1px 2px)"></div>
<div class="a" style="left:71px;top:255px;width:13px;height:13px;border:2px solid #000;background:#fff"></div>
<svg class="a" style="left:71px;top:255px" width="13" height="13" viewBox="0 0 13 13" shape-rendering="crispEdges"><path d="M2.8 5.6 L5.2 8.4 L10.2 3.2" stroke="#000" stroke-width="2.3" fill="none" shape-rendering="auto"/></svg>
<svg class="a" style="left:85px;top:254px" width="6" height="8" viewBox="0 0 6 8" shape-rendering="crispEdges"><path d="M1 2 Q1 0.5 2.8 0.5 Q4.6 0.5 4.6 2 Q4.6 3 3.2 3.8 Q2.6 4.2 2.6 5.2" stroke="#000" stroke-width="1.3" fill="none" shape-rendering="auto"/><rect x="1" y="6" width="2" height="1" fill="#000"/></svg>
<svg class="a" style="left:90px;top:260px" width="8" height="8" viewBox="0 0 8 8" shape-rendering="crispEdges"><path d="M0.5 0.5 H4.5 L6.5 2.5 V6.5 H0.5 Z" fill="#fff" stroke="#777"/><path d="M1 7 H7 V3" stroke="#333" fill="none"/><rect x="1" y="3" width="4" height="2" fill="#f00"/></svg>
<div class="t" style="left:105px;top:255px;">COMPUTE FACTOR2 = FACTOR2 * 0.7</div>
<div class="a" style="left:59px;top:277px;width:12px;height:1px;background:repeating-linear-gradient(to right,#A0A0A0 0 1px,transparent 1px 2px)"></div>
<div class="a" style="left:71px;top:271px;width:13px;height:13px;border:2px solid #000;background:#fff"></div>
<svg class="a" style="left:89px;top:273px" width="8" height="8" viewBox="0 0 8 8" shape-rendering="crispEdges"><path d="M0.5 0.5 H4.5 L6.5 2.5 V6.5 H0.5 Z" fill="#fff" stroke="#777"/><path d="M1 7 H7 V3" stroke="#333" fill="none"/><rect x="1" y="3" width="4" height="2" fill="#f00"/></svg>
<div class="t" style="left:105px;top:271px;">COMPUTE FACTOR1 = FACTOR1 * 0.5</div>
<div class="a" style="left:35px;top:289px;width:9px;height:9px;border:1px solid #A5A08A;background:#fff"></div>
<div class="a" style="left:37px;top:293px;width:5px;height:1px;background:#000"></div>
<div class="a" style="left:45px;top:293px;width:7px;height:1px;background:repeating-linear-gradient(to right,#A0A0A0 0 1px,transparent 1px 2px)"></div>
<div class="a" style="left:52px;top:287px;width:13px;height:13px;border:2px solid #000;background:#fff"></div>
<svg class="a" style="left:66px;top:286px" width="15" height="14" viewBox="0 0 15 14" shape-rendering="crispEdges"><rect x="0" y="0" width="11" height="2" fill="#000"/><rect x="10" y="0" width="1" height="3" fill="#000"/><rect x="0" y="2" width="10" height="1" fill="#fff"/><rect x="1" y="2" width="8" height="1" fill="#c8c8c8"/><rect x="1" y="3" width="12" height="2" fill="#000"/><rect x="12" y="3" width="1" height="4" fill="#000"/><rect x="2" y="5" width="9" height="1" fill="#bbb"/><rect x="1" y="5" width="1" height="1" fill="#999"/><rect x="1" y="7" width="1" height="1" fill="#999"/><rect x="1" y="9" width="1" height="1" fill="#999"/><rect x="3" y="7" width="12" height="7" fill="#b0b0b0"/><rect x="3" y="7" width="12" height="1" fill="#000"/><rect x="4" y="8" width="10" height="1" fill="#333"/><rect x="14" y="7" width="1" height="7" fill="#000"/><rect x="3" y="13" width="12" height="1" fill="#222"/><rect x="5" y="9" width="3" height="3" fill="#eee"/><rect x="9" y="10" width="3" height="2" fill="#fff"/><rect x="6" y="10" width="1" height="1" fill="#000"/><rect x="4" y="12" width="10" height="1" fill="#888"/></svg>
<div class="t" style="left:87px;top:287px;letter-spacing:0.2px">100-FACTOR2(12)[1]</div>
<div class="a" style="left:59px;top:309px;width:12px;height:1px;background:repeating-linear-gradient(to right,#A0A0A0 0 1px,transparent 1px 2px)"></div>
<div class="a" style="left:71px;top:303px;width:13px;height:13px;border:2px solid #000;background:#fff"></div>
<svg class="a" style="left:85px;top:302px" width="6" height="8" viewBox="0 0 6 8" shape-rendering="crispEdges"><path d="M1 2 Q1 0.5 2.8 0.5 Q4.6 0.5 4.6 2 Q4.6 3 3.2 3.8 Q2.6 4.2 2.6 5.2" stroke="#000" stroke-width="1.3" fill="none" shape-rendering="auto"/><rect x="1" y="6" width="2" height="1" fill="#000"/></svg>
<svg class="a" style="left:90px;top:308px" width="8" height="8" viewBox="0 0 8 8" shape-rendering="crispEdges"><path d="M0.5 0.5 H4.5 L6.5 2.5 V6.5 H0.5 Z" fill="#fff" stroke="#777"/><path d="M1 7 H7 V3" stroke="#333" fill="none"/><rect x="1" y="3" width="4" height="2" fill="#f00"/></svg>
<div class="t" style="left:105px;top:303px;">COMPUTE FACTOR2 = FACTOR2 * 0.9</div>
<div class="a" style="left:59px;top:325px;width:12px;height:1px;background:repeating-linear-gradient(to right,#A0A0A0 0 1px,transparent 1px 2px)"></div>
<div class="a" style="left:71px;top:319px;width:13px;height:13px;border:2px solid #000;background:#fff"></div>
<svg class="a" style="left:85px;top:318px" width="6" height="8" viewBox="0 0 6 8" shape-rendering="crispEdges"><path d="M1 2 Q1 0.5 2.8 0.5 Q4.6 0.5 4.6 2 Q4.6 3 3.2 3.8 Q2.6 4.2 2.6 5.2" stroke="#000" stroke-width="1.3" fill="none" shape-rendering="auto"/><rect x="1" y="6" width="2" height="1" fill="#000"/></svg>
<svg class="a" style="left:90px;top:324px" width="8" height="8" viewBox="0 0 8 8" shape-rendering="crispEdges"><path d="M0.5 0.5 H4.5 L6.5 2.5 V6.5 H0.5 Z" fill="#fff" stroke="#777"/><path d="M1 7 H7 V3" stroke="#333" fill="none"/><rect x="1" y="3" width="4" height="2" fill="#f00"/></svg>
<div class="t" style="left:105px;top:319px;">COMPUTE FACTOR2 = FACTOR2 * 0.7</div>
<div class="a" style="left:59px;top:341px;width:12px;height:1px;background:repeating-linear-gradient(to right,#A0A0A0 0 1px,transparent 1px 2px)"></div>
<div class="a" style="left:71px;top:335px;width:13px;height:13px;border:2px solid #000;background:#fff"></div>
<svg class="a" style="left:89px;top:337px" width="8" height="8" viewBox="0 0 8 8" shape-rendering="crispEdges"><path d="M0.5 0.5 H4.5 L6.5 2.5 V6.5 H0.5 Z" fill="#fff" stroke="#777"/><path d="M1 7 H7 V3" stroke="#333" fill="none"/><rect x="1" y="3" width="4" height="2" fill="#f00"/></svg>
<div class="t" style="left:105px;top:335px;">COMPUTE FACTOR1 = FACTOR1 * 0.9</div>
<div class="a" style="left:59px;top:357px;width:12px;height:1px;background:repeating-linear-gradient(to right,#A0A0A0 0 1px,transparent 1px 2px)"></div>
<div class="a" style="left:71px;top:351px;width:13px;height:13px;border:2px solid #000;background:#fff"></div>
<svg class="a" style="left:85px;top:350px" width="6" height="8" viewBox="0 0 6 8" shape-rendering="crispEdges"><path d="M1 2 Q1 0.5 2.8 0.5 Q4.6 0.5 4.6 2 Q4.6 3 3.2 3.8 Q2.6 4.2 2.6 5.2" stroke="#000" stroke-width="1.3" fill="none" shape-rendering="auto"/><rect x="1" y="6" width="2" height="1" fill="#000"/></svg>
<svg class="a" style="left:90px;top:356px" width="8" height="8" viewBox="0 0 8 8" shape-rendering="crispEdges"><path d="M0.5 0.5 H4.5 L6.5 2.5 V6.5 H0.5 Z" fill="#fff" stroke="#777"/><path d="M1 7 H7 V3" stroke="#333" fill="none"/><rect x="1" y="3" width="4" height="2" fill="#f00"/></svg>
<div class="t" style="left:105px;top:351px;">COMPUTE FACTOR2 = FACTOR2 * 0.95</div>
</div>
<div class="t" style="left:310px;top:118px;">Business <span class="u">A</span>rea:</div>
<div class="a" style="left:384px;top:117px;width:258px;height:20px;background:#ECE9D8;border-style:solid;border-width:1px;border-color:#ACA899 #fff #fff #ACA899;box-shadow:inset 1px 1px 0 #716F64, inset -1px -1px 0 #F1EFE2"></div>
<div class="t" style="left:311px;top:140px;"><span class="u">N</span>ame:</div>
<div class="a" style="left:344px;top:139px;width:298px;height:20px;background:#fff;border-style:solid;border-width:1px;border-color:#ACA899 #fff #fff #ACA899;box-shadow:inset 1px 1px 0 #716F64, inset -1px -1px 0 #F1EFE2"></div>
<div class="t" style="left:346px;top:143px;">Execute 100-FACTOR2 when (GOLD)</div>
<div class="a" style="left:311px;top:182px;width:331px;height:1px;background:#fff"></div>
<div class="a" style="left:311px;top:182px;width:1px;height:39px;background:#fff"></div>
<div class="a" style="left:641px;top:182px;width:1px;height:39px;background:#716F64"></div>
<div class="a" style="left:640px;top:183px;width:1px;height:37px;background:#ACA899"></div>
<div class="a" style="left:311px;top:220px;width:331px;height:1px;background:#716F64"></div>
<div class="a" style="left:312px;top:219px;width:329px;height:1px;background:#ACA899"></div>
<div class="a" style="left:429px;top:163px;width:103px;height:1px;background:#fff"></div>
<div class="a" style="left:533px;top:165px;width:1px;height:17px;background:#716F64"></div>
<div class="a" style="left:532px;top:164px;width:1px;height:18px;background:#ACA899"></div>
<div class="a" style="left:532px;top:164px;width:1px;height:1px;background:#716F64"></div>
<div class="a" style="left:312px;top:162px;width:114px;height:21px;background:#ECE9D8"></div>
<div class="a" style="left:313px;top:161px;width:112px;height:1px;background:#fff"></div>
<div class="a" style="left:312px;top:162px;width:1px;height:1px;background:#fff"></div>
<div class="a" style="left:311px;top:163px;width:1px;height:20px;background:#fff"></div>
<div class="a" style="left:426px;top:163px;width:1px;height:20px;background:#716F64"></div>
<div class="a" style="left:425px;top:162px;width:1px;height:21px;background:#ACA899"></div>
<div class="a" style="left:425px;top:162px;width:1px;height:1px;background:#716F64"></div>
<div class="t" style="left:317px;top:165px;letter-spacing:0.1px">Technical Description</div>
<div class="t" style="left:429px;top:167px;">Business Description</div>
<div class="a" style="left:315px;top:183px;width:323px;height:34px;background:#fff;border:1px solid #000;box-shadow:inset 1px 1px 0 #8E8B7E, inset 2px 2px 0 #C8C5B8, inset -1px -1px 0 #DEDBCF"></div>
<div class="t" style="left:318px;top:188px;">Execute 100-FACTOR2.</div>
<div class="a" style="left:311px;top:226px;width:332px;height:49px;background:#fff;border-style:solid;border-width:1px;border-color:#ACA899 #fff #fff #ACA899;box-shadow:inset 1px 1px 0 #716F64, inset -1px -1px 0 #F1EFE2"></div>
<div class="a" style="left:413px;top:228px;width:212px;height:45px;background:#F4F3EE"></div>
<div class="t" style="left:314px;top:231px;letter-spacing:0.1px">To Be Reviewed By:</div>
<div class="a" style="left:415px;top:229px;width:209px;height:20px;background:#fff;border-style:solid;border-width:1px;border-color:#ACA899 #fff #fff #ACA899;box-shadow:inset 1px 1px 0 #716F64, inset -1px -1px 0 #F1EFE2"></div>
<div class="t" style="left:417px;top:232px;">NICKC</div>
<div class="t" style="left:315px;top:253px;letter-spacing:0.3px">Audit:</div>
<div class="a" style="left:415px;top:250px;width:209px;height:22px;background:#fff;border-style:solid;border-width:1px;border-color:#ACA899 #fff #fff #ACA899;box-shadow:inset 1px 1px 0 #716F64, inset -1px -1px 0 #F1EFE2"></div>
<div class="t" style="left:417px;top:256px;">Not Approved</div>
<div class="a" style="left:607px;top:252px;width:16px;height:18px;background:#ECE9D8;border-style:solid;border-width:1px;border-color:#F1EFE2 #716F64 #716F64 #F1EFE2;box-shadow:inset 1px 1px 0 #fff, inset -1px -1px 0 #ACA899"></div>
<svg class="a" style="left:611px;top:258px" width="7" height="4" viewBox="0 0 7 4" shape-rendering="crispEdges"><path d="M0 0 H7 L3.5 4 Z" fill="#000"/></svg>
<div class="a" style="left:625px;top:228px;width:16px;height:45px;background:#F4F3EE"></div>
<div class="a" style="left:625px;top:227px;width:17px;height:16px;background:#ECE9D8;border-style:solid;border-width:1px;border-color:#F1EFE2 #716F64 #716F64 #F1EFE2;box-shadow:inset 1px 1px 0 #fff, inset -1px -1px 0 #ACA899"></div>
<svg class="a" style="left:630px;top:232px" width="7" height="4" viewBox="0 0 7 4" shape-rendering="crispEdges"><path d="M0 4 H7 L3.5 0 Z" fill="#000"/></svg>
<div class="a" style="left:625px;top:243px;width:17px;height:8px;background:#ECE9D8;border-style:solid;border-width:1px;border-color:#F1EFE2 #716F64 #716F64 #F1EFE2;box-shadow:inset 1px 1px 0 #fff, inset -1px -1px 0 #ACA899"></div>
<div class="a" style="left:626px;top:251px;width:15px;height:8px;background:#fff"></div>
<div class="a" style="left:625px;top:259px;width:17px;height:15px;background:#ECE9D8;border-style:solid;border-width:1px;border-color:#F1EFE2 #716F64 #716F64 #F1EFE2;box-shadow:inset 1px 1px 0 #fff, inset -1px -1px 0 #ACA899"></div>
<svg class="a" style="left:630px;top:265px" width="7" height="4" viewBox="0 0 7 4" shape-rendering="crispEdges"><path d="M0 0 H7 L3.5 4 Z" fill="#000"/></svg>
<div class="t" style="left:311px;top:281px;letter-spacing:0.2px"><span class="u">T</span>riggers:</div>
<div class="a" style="left:356px;top:280px;width:263px;height:20px;background:#fff;border-style:solid;border-width:1px;border-color:#ACA899 #fff #fff #ACA899;box-shadow:inset 1px 1px 0 #716F64, inset -1px -1px 0 #F1EFE2"></div>
<div class="t" style="left:359px;top:284px;letter-spacing:0.1px">100-FACTOR2(12)[1]</div>
<div class="a" style="left:620px;top:280px;width:22px;height:20px;background:#ECE9D8;border-style:solid;border-width:1px;border-color:#F1EFE2 #716F64 #716F64 #F1EFE2;box-shadow:inset 1px 1px 0 #fff, inset -1px -1px 0 #ACA899"></div>
<div class="a" style="left:626px;top:292px;width:2px;height:2px;background:#000"></div>
<div class="a" style="left:630px;top:292px;width:2px;height:2px;background:#000"></div>
<div class="a" style="left:634px;top:292px;width:2px;height:2px;background:#000"></div>
<div class="a" style="left:311px;top:325px;width:331px;height:1px;background:#fff"></div>
<div class="a" style="left:311px;top:325px;width:1px;height:187px;background:#fff"></div>
<div class="a" style="left:641px;top:325px;width:1px;height:187px;background:#716F64"></div>
<div class="a" style="left:640px;top:326px;width:1px;height:186px;background:#ACA899"></div>
<div class="a" style="left:315px;top:307px;width:96px;height:1px;background:#fff"></div>
<div class="a" style="left:314px;top:308px;width:1px;height:1px;background:#fff"></div>
<div class="a" style="left:313px;top:309px;width:1px;height:16px;background:#fff"></div>
<div class="a" style="left:412px;top:306px;width:102px;height:20px;background:#ECE9D8"></div>
<div class="a" style="left:413px;top:305px;width:100px;height:1px;background:#fff"></div>
<div class="a" style="left:412px;top:306px;width:1px;height:1px;background:#fff"></div>
<div class="a" style="left:411px;top:307px;width:1px;height:19px;background:#fff"></div>
<div class="a" style="left:514px;top:307px;width:1px;height:19px;background:#716F64"></div>
<div class="a" style="left:513px;top:306px;width:1px;height:20px;background:#ACA899"></div>
<div class="a" style="left:513px;top:306px;width:1px;height:1px;background:#716F64"></div>
<div class="t" style="left:317px;top:311px;letter-spacing:0.2px">I/O Data Elements</div>
<div class="t" style="left:418px;top:309px;">Control Conditions</div>
<div class="a" style="left:315px;top:327px;width:323px;height:185px;background:#fff;border:1px solid #000;box-shadow:inset 1px 1px 0 #8E8B7E, inset 2px 2px 0 #C8C5B8, inset -1px -1px 0 #DEDBCF"></div>
<div class="a" style="left:318px;top:330px;width:318px;height:17px;background:#ECE9D8"></div>
<div class="a" style="left:318px;top:330px;width:52px;height:1px;background:#fff"></div>
<div class="a" style="left:318px;top:330px;width:1px;height:16px;background:#fff"></div>
<div class="a" style="left:369px;top:330px;width:1px;height:17px;background:#716F64"></div>
<div class="a" style="left:368px;top:331px;width:1px;height:15px;background:#ACA899"></div>
<div class="a" style="left:318px;top:346px;width:52px;height:1px;background:#716F64"></div>
<div class="a" style="left:319px;top:345px;width:50px;height:1px;background:#ACA899"></div>
<div class="t" style="left:323px;top:333px;">Name</div>
<div class="a" style="left:370px;top:330px;width:60px;height:1px;background:#fff"></div>
<div class="a" style="left:370px;top:330px;width:1px;height:16px;background:#fff"></div>
<div class="a" style="left:429px;top:330px;width:1px;height:17px;background:#716F64"></div>
<div class="a" style="left:428px;top:331px;width:1px;height:15px;background:#ACA899"></div>
<div class="a" style="left:370px;top:346px;width:60px;height:1px;background:#716F64"></div>
<div class="a" style="left:371px;top:345px;width:58px;height:1px;background:#ACA899"></div>
<div class="t" style="left:375px;top:333px;">Operator</div>
<div class="a" style="left:430px;top:330px;width:63px;height:1px;background:#fff"></div>
<div class="a" style="left:430px;top:330px;width:1px;height:16px;background:#fff"></div>
<div class="a" style="left:492px;top:330px;width:1px;height:17px;background:#716F64"></div>
<div class="a" style="left:491px;top:331px;width:1px;height:15px;background:#ACA899"></div>
<div class="a" style="left:430px;top:346px;width:63px;height:1px;background:#716F64"></div>
<div class="a" style="left:431px;top:345px;width:61px;height:1px;background:#ACA899"></div>
<div class="t" style="left:436px;top:333px;">Argument</div>
<div class="a" style="left:493px;top:330px;width:111px;height:1px;background:#fff"></div>
<div class="a" style="left:493px;top:330px;width:1px;height:16px;background:#fff"></div>
<div class="a" style="left:603px;top:330px;width:1px;height:17px;background:#716F64"></div>
<div class="a" style="left:602px;top:331px;width:1px;height:15px;background:#ACA899"></div>
<div class="a" style="left:493px;top:346px;width:111px;height:1px;background:#716F64"></div>
<div class="a" style="left:494px;top:345px;width:109px;height:1px;background:#ACA899"></div>
<div class="t" style="left:498px;top:333px;">Description</div>
<div class="a" style="left:604px;top:330px;width:32px;height:1px;background:#fff"></div>
<div class="a" style="left:604px;top:330px;width:1px;height:16px;background:#fff"></div>
<div class="a" style="left:604px;top:346px;width:32px;height:1px;background:#716F64"></div>
<div class="a" style="left:605px;top:345px;width:31px;height:1px;background:#ACA899"></div>
<div class="a" style="left:318px;top:361px;width:318px;height:1px;background:#EBE8D9"></div>
<div class="a" style="left:318px;top:375px;width:318px;height:1px;background:#EBE8D9"></div>
<div class="a" style="left:318px;top:389px;width:318px;height:1px;background:#EBE8D9"></div>
<div class="a" style="left:318px;top:403px;width:318px;height:1px;background:#EBE8D9"></div>
<div class="a" style="left:318px;top:417px;width:318px;height:1px;background:#EBE8D9"></div>
<div class="a" style="left:318px;top:431px;width:318px;height:1px;background:#EBE8D9"></div>
<div class="a" style="left:318px;top:445px;width:318px;height:1px;background:#EBE8D9"></div>
<div class="a" style="left:318px;top:459px;width:318px;height:1px;background:#EBE8D9"></div>
<div class="a" style="left:318px;top:473px;width:318px;height:1px;background:#EBE8D9"></div>
<div class="a" style="left:318px;top:487px;width:318px;height:1px;background:#EBE8D9"></div>
<div class="a" style="left:370px;top:347px;width:1px;height:145px;background:#EBE8D9"></div>
<div class="a" style="left:430px;top:347px;width:1px;height:145px;background:#EBE8D9"></div>
<div class="a" style="left:493px;top:347px;width:1px;height:145px;background:#EBE8D9"></div>
<div class="a" style="left:604px;top:347px;width:1px;height:145px;background:#EBE8D9"></div>
<div class="t" style="left:321px;top:349px;letter-spacing:-0.3px">GOLD</div>
<div class="t" style="left:376px;top:349px;">=</div>
<div class="t" style="left:436px;top:349px;">false</div>
<div class="t" style="left:498px;top:349px;">Ln 32: GOLD is false</div>
<div class="a" style="left:318px;top:492px;width:317px;height:17px;background:#FEFEFB;border-top:1px solid #F3F1EC"></div>
<div class="a" style="left:336px;top:493px;width:199px;height:16px;background:linear-gradient(to bottom,#CAD8FC 0%,#C3D3FD 50%,#B4C8F8 100%);border:1px solid #fff;border-bottom:none;border-radius:2px;box-shadow:inset 0 -1px 0 #98B0EE"></div>
<div class="a" style="left:431px;top:498px;width:1px;height:6px;background:#fff"></div>
<div class="a" style="left:432px;top:499px;width:1px;height:6px;background:#8CB0F8"></div>
<div class="a" style="left:433px;top:498px;width:1px;height:6px;background:#fff"></div>
<div class="a" style="left:434px;top:499px;width:1px;height:6px;background:#8CB0F8"></div>
<div class="a" style="left:435px;top:498px;width:1px;height:6px;background:#fff"></div>
<div class="a" style="left:436px;top:499px;width:1px;height:6px;background:#8CB0F8"></div>
<div class="a" style="left:437px;top:498px;width:1px;height:6px;background:#fff"></div>
<div class="a" style="left:438px;top:499px;width:1px;height:6px;background:#8CB0F8"></div>
<div class="a" style="left:318px;top:493px;width:17px;height:15px;background:linear-gradient(to bottom,#D6E2FE,#BCCFFA);border:1px solid #fff;border-radius:2px;box-shadow:0 1px 0 #8FA6DC"></div>
<svg class="a" style="left:322px;top:496px" width="8" height="9" viewBox="0 0 8 9" shape-rendering="crispEdges"><path d="M5.5 0.8 L1.8 4.5 L5.5 8.2" stroke="#4D6185" stroke-width="2.2" fill="none" shape-rendering="auto"/></svg>
<div class="a" style="left:618px;top:493px;width:17px;height:15px;background:linear-gradient(to bottom,#D6E2FE,#BCCFFA);border:1px solid #fff;border-radius:2px;box-shadow:0 1px 0 #8FA6DC"></div>
<svg class="a" style="left:623px;top:496px" width="8" height="9" viewBox="0 0 8 9" shape-rendering="crispEdges"><path d="M2.5 0.8 L6.2 4.5 L2.5 8.2" stroke="#4D6185" stroke-width="2.2" fill="none" shape-rendering="auto"/></svg>
</body></html>
